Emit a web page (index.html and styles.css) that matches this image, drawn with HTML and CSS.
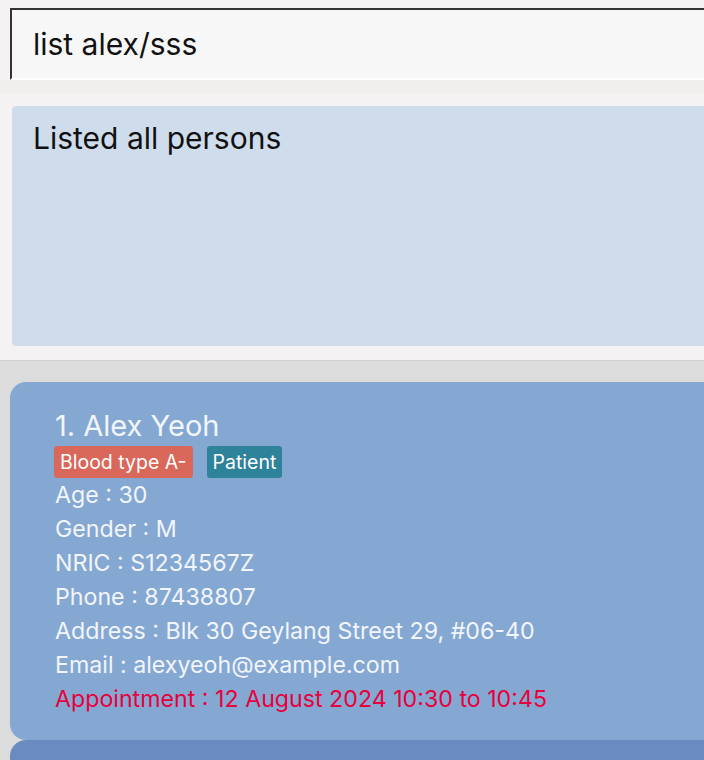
FILE: index.html
```html
<!DOCTYPE html>
<html>
<head>
<meta charset="utf-8">
<link rel="stylesheet" href="styles.css">
</head>
<body>
<div class="app">
  <div class="command-wrap">
    <div class="command">list alex/sss</div>
  </div>
  <div class="result-wrap">
    <div class="result">Listed all persons</div>
  </div>
  <div class="list">
    <div class="card">
      <div class="name">1. Alex Yeoh</div>
      <div class="tags">
        <span class="tag blood">Blood type A-</span>
        <span class="tag patient">Patient</span>
      </div>
      <div class="field">Age : 30</div>
      <div class="field">Gender : M</div>
      <div class="field">NRIC : S1234567Z</div>
      <div class="field">Phone : 87438807</div>
      <div class="field">Address : Blk 30 Geylang Street 29, #06-40</div>
      <div class="field">Email : alexyeoh@example.com</div>
      <div class="field appt">Appointment : 12 August 2024 10:30 to 10:45</div>
    </div>
    <div class="card card-2"></div>
  </div>
</div>
</body>
</html>
```
FILE: styles.css
```css
html, body {
  margin: 0;
  padding: 0;
  height: 100%;
  overflow: hidden;
}
body {
  background: #f4f2f2;
  font-family: Inter, "Noto Sans", sans-serif;
}
.app {
  width: 704px;
  height: 760px;
  overflow: hidden;
}
.command-wrap {
  padding: 8px 0 0 10px;
  border-bottom: 13px solid #f1efee;
}
.command {
  box-sizing: border-box;
  height: 72px;
  margin-right: -20px;
  background: #f7f7f7;
  border-top: 2px solid #333333;
  border-left: 2px solid #333333;
  border-bottom: 2px solid #ffffff;
  padding: 14px 0 0 21px;
  font-size: 30px;
  color: #111111;
  line-height: 40px;
}
.result-wrap {
  padding: 13px 0 14px 12px;
}
.result {
  height: 240px;
  margin-right: -20px;
  background: #cfdcec;
  border-radius: 4px;
  padding: 12px 0 0 21px;
  box-sizing: border-box;
  font-size: 30px;
  line-height: 40px;
  color: #111111;
}
.list {
  background: #dcdcdc;
  border-top: 1px solid #d2d0d0;
  padding: 21px 0 0 10px;
  height: 400px;
}
.card {
  background: #85a8d3;
  border-radius: 16px;
  margin-right: -20px;
  padding: 26px 0 0 45px;
  height: 358px;
  box-sizing: border-box;
  color: #f2f5fa;
}
.card-2 {
  background: #6a8bc0;
}
.name {
  font-size: 29px;
  line-height: 36px;
}
.tags {
  display: flex;
  gap: 14px;
  margin-top: 2px;
  margin-left: -1px;
}
.tag {
  font-size: 19.5px;
  line-height: 32px;
  padding: 0 6px;
  border-radius: 3px;
  color: #ffffff;
}
.blood { background: #d9685a; }
.patient { background: #2e8299; }
.field {
  font-size: 23.2px;
  line-height: 34px;
}
.appt {
  color: #e8003c;
}
```
